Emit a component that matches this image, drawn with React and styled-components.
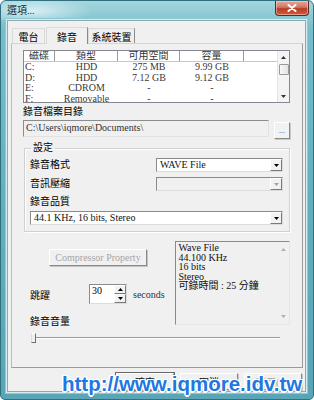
import React from 'react';
import styled, { createGlobalStyle } from 'styled-components';

const GlobalStyle = createGlobalStyle`
  body {
    margin: 0;
    background: #ffffff;
  }
  * {
    box-sizing: border-box;
  }
`;

const UI_FONT = `"Liberation Serif", "Noto Sans CJK TC", serif`;

// Window frame
const Window = styled.div`
  position: relative;
  width: 314px;
  height: 400px;
  display: flex;
  flex-direction: column;
  padding: 0 7px 7px 6px;
  border: 1px solid #2f6f7e;
  border-radius: 6px 6px 5px 5px;
  background: linear-gradient(180deg, #a4d6de 0%, #78bdc9 7%, #64afbe 50%, #5aa5b5 100%);
  font-family: ${UI_FONT};
  font-size: 10px;
  color: #000;
  overflow: hidden;
`;

const TitleBar = styled.div`
  height: 19px;
  display: flex;
  align-items: flex-start;
  background: radial-gradient(ellipse 60px 14px at 32px 10px, rgba(230, 247, 250, 0.8), rgba(230, 247, 250, 0) 100%);
  margin: 0 -7px 0 -6px;
  padding: 0 0 0 6px;
`;

const TitleText = styled.span`
  margin-top: 4px;
  font-size: 10px;
  line-height: 12px;
  color: #15262c;
`;

const CloseButton = styled.div`
  margin-left: auto;
  margin-right: 4px;
  width: 34px;
  height: 15px;
  display: flex;
  align-items: center;
  justify-content: center;
  border: 1px solid #5e2a22;
  border-top: none;
  border-radius: 0 0 4px 4px;
  background: linear-gradient(180deg, #e6a89c 0%, #d27562 45%, #b83d24 55%, #cc5c42 100%);
  box-shadow: inset 0 0 0 1px rgba(255, 220, 210, 0.5);
`;

const Client = styled.div`
  flex: 1;
  display: flex;
  flex-direction: column;
  padding: 5px 2px 1px 3px;
  background: #f0f0f0;
  border: 1px solid #8fa9b0;
  box-shadow: 0 0 0 1px #d4ebef, 0 0 0 2px #8ccbd6;
`;

// Tabs
const TabStrip = styled.div`
  height: 17px;
  display: flex;
  align-items: flex-end;
  padding-left: 1px;
`;

const Tab = styled.div`
  width: ${p => p.$w}px;
  height: ${p => (p.$active ? 17 : 15)}px;
  margin-right: ${p => (p.$active ? 0 : 1)}px;
  display: flex;
  align-items: center;
  justify-content: center;
  font-size: 10px;
  background: #f0f0f0;
  border: 1px solid #dadada;
  border-right-color: ${p => (p.$edge ? '#8a8a8a' : '#dadada')};
  border-bottom: none;
  position: relative;
  z-index: ${p => (p.$active ? 1 : 0)};
  margin-bottom: ${p => (p.$active ? -1 : 0)}px;
`;

const Panel = styled.div`
  height: 325px;
  display: flex;
  flex-direction: column;
  padding: 6px 12px 0 11px;
  border: 1px solid #9a9a9a;
  border-top-color: #d4d4d4;
  border-left-color: #bcbcbc;
`;

// Drive list
const DriveList = styled.div`
  height: 53px;
  display: flex;
  border: 1px solid #828790;
  background: #ffffff;
  overflow: hidden;
`;

const ListBody = styled.div`
  flex: 1;
  overflow: hidden;
`;

const HeaderRow = styled.div`
  display: grid;
  grid-template-columns: 31px 63px 62px 64px 1fr;
  height: 11px;
  border-bottom: 1px solid #c8c8c8;
`;

const HeaderCell = styled.div`
  font-size: 10px;
  line-height: 10px;
  text-align: center;
  color: #333;
  border-right: 1px solid #9a9a9a;
  &:last-child {
    border-right: none;
  }
`;

const DataRow = styled.div`
  display: grid;
  grid-template-columns: 31px 63px 62px 64px 1fr;
  height: 10.5px;
`;

const DataCell = styled.div`
  font-size: 10px;
  line-height: 10.5px;
  color: #3a3a3a;
  text-align: ${p => (p.$left ? 'left' : 'center')};
  padding-left: ${p => (p.$left ? 1 : 0)}px;
  white-space: nowrap;
`;

const ScrollTrack = styled.div`
  width: 12px;
  display: flex;
  flex-direction: column;
  align-items: center;
  background: #f4f4f4;
  border-left: 1px solid #e4e4e4;
`;

const ScrollArrow = styled.div`
  height: ${p => p.$h}px;
  width: 11px;
  display: flex;
  align-items: center;
  justify-content: center;
`;

const ScrollThumb = styled.div`
  width: 10px;
  height: 11px;
  margin-top: 1px;
  border: 1px solid #9a9a9a;
  border-radius: 1px;
  background: linear-gradient(90deg, #f8f8f8, #e4e4e4);
`;

const ScrollSpacer = styled.div`
  flex: 1;
`;

// Path
const FieldLabel = styled.div`
  height: 12px;
  line-height: 12px;
  margin-top: ${p => p.$mt || 0}px;
  padding-left: ${p => p.$pl || 0}px;
  font-size: 10px;
  white-space: nowrap;
`;

const PathRow = styled.div`
  margin-top: 2px;
  display: flex;
  align-items: flex-start;
  gap: 5px;
`;

const PathBox = styled.div`
  width: 247px;
  height: 17px;
  padding: 1px 2px;
  font-size: 10px;
  line-height: 12px;
  color: #333;
  background: #f0f0f0;
  border: 1px solid;
  border-color: #8c8c8c #e2e2e2 #e2e2e2 #8c8c8c;
  white-space: nowrap;
  overflow: hidden;
`;

const BrowseButton = styled.div`
  margin-top: 2px;
  width: 16px;
  height: 17px;
  display: flex;
  align-items: flex-end;
  justify-content: center;
  padding-bottom: 3px;
  font-size: 8px;
  line-height: 8px;
  color: #444;
  background: #f2f2f2;
  border: 1px solid;
  border-color: #ffffff #8a8a8a #8a8a8a #ffffff;
  box-shadow: 1px 1px 0 #c8c8c8;
`;

// Group box
const GroupBox = styled.fieldset`
  margin: 3px 0 0 1px;
  padding: 4px 6px 6px 5px;
  min-width: 0;
  border: 1px solid #d0d0d0;
  box-shadow: inset 1px 1px 0 #ffffff, 1px 1px 0 #ffffff;
`;

const GroupLegend = styled.legend`
  margin-left: 1px;
  padding: 0 2px;
  font-size: 10px;
  line-height: 12px;
`;

const SettingRow = styled.div`
  margin-top: ${p => p.$mt || 0}px;
  display: flex;
  align-items: center;
  height: 14px;
`;

const SettingLabel = styled.div`
  width: 126px;
  font-size: 10px;
  line-height: 12px;
`;

const Combo = styled.div`
  flex: 1;
  height: 14px;
  display: flex;
  align-items: center;
  padding-left: 3px;
  font-size: 10px;
  color: #111;
  background: ${p => (p.$disabled ? '#f0f0f0' : '#ffffff')};
  border: 1px solid;
  border-color: #8a8a8a #dcdcdc #dcdcdc #8a8a8a;
`;

const ComboText = styled.span`
  flex: 1;
  line-height: 12px;
  white-space: nowrap;
`;

const ComboButton = styled.div`
  width: 12px;
  height: 12px;
  display: flex;
  align-items: center;
  justify-content: center;
  background: #f2f2f2;
  border: 1px solid;
  border-color: #ffffff #7a7a7a #7a7a7a #ffffff;
`;

// Lower section
const LowerRow = styled.div`
  margin-top: 9px;
  display: flex;
  align-items: flex-start;
`;

const LeftCol = styled.div`
  width: 153px;
  display: flex;
  flex-direction: column;
`;

const PushButton = styled.div`
  width: ${p => p.$w}px;
  height: 17px;
  margin-top: ${p => p.$mt || 0}px;
  margin-left: ${p => p.$ml || 0}px;
  display: flex;
  align-items: center;
  justify-content: center;
  font-family: ${UI_FONT};
  font-size: 10px;
  color: ${p => (p.$disabled ? '#a6a6a6' : '#111')};
  background: #f0f0f0;
  border: 1px solid;
  border-color: #ffffff #8a8a8a #8a8a8a #ffffff;
  box-shadow: ${p => (p.$default ? '0 0 0 1px #6a6a6a' : '1px 1px 0 #c4c4c4')};
  white-space: nowrap;
`;

const SpinRow = styled.div`
  margin-top: 18px;
  padding-left: 7px;
  display: flex;
  align-items: center;
  height: 20px;
`;

const SpinLabel = styled.div`
  width: 59px;
  font-size: 10px;
`;

const SpinBox = styled.div`
  display: flex;
  height: 20px;
  border: 1px solid;
  border-color: #8a8a8a #dcdcdc #dcdcdc #8a8a8a;
`;

const SpinInput = styled.div`
  width: 24px;
  padding: 0 2px;
  font-size: 10px;
  line-height: 11px;
  background: #ffffff;
`;

const SpinButtons = styled.div`
  width: 12px;
  display: flex;
  flex-direction: column;
`;

const SpinButton = styled.div`
  flex: 1;
  display: flex;
  align-items: center;
  justify-content: center;
  background: #f2f2f2;
  border: 1px solid;
  border-color: #ffffff #7a7a7a #7a7a7a #ffffff;
`;

const Unit = styled.div`
  margin-left: 6px;
  font-size: 10px;
  color: #333;
`;

const InfoBox = styled.div`
  width: 115px;
  height: 84px;
  display: flex;
  background: #f0f0f0;
  border: 1px solid;
  border-color: #8a8a8a #e6e6e6 #e6e6e6 #8a8a8a;
`;

const InfoText = styled.div`
  flex: 1;
  padding: 1px 2px;
  font-size: 10px;
  line-height: 9.6px;
  color: #111;
  white-space: nowrap;
`;

const InfoScroll = styled.div`
  width: 12px;
  display: flex;
  flex-direction: column;
  justify-content: space-between;
  align-items: center;
  padding: 6px 0 6px;
`;

const SliderArea = styled.div`
  height: 20px;
  padding-left: 10px;
  display: flex;
  align-items: center;
`;

const SliderTrack = styled.div`
  position: relative;
  width: 247px;
  height: 2px;
  border-top: 1px solid #9a9a9a;
  border-bottom: 1px solid #ffffff;
  background: #c8c8c8;
`;

const SliderThumb = styled.div`
  position: absolute;
  left: -2px;
  top: -5px;
  width: 5px;
  height: 10px;
  background: #f0f0f0;
  border: 1px solid;
  border-color: #ffffff #6e6e6e #6e6e6e #dcdcdc;
`;

const ButtonRow = styled.div`
  margin-top: 5px;
  display: flex;
  justify-content: flex-end;
  gap: 6px;
  padding-right: 1px;
`;

const Watermark = styled.div`
  position: absolute;
  left: 61px;
  top: 371px;
  font-family: "Liberation Sans", Arial, sans-serif;
  font-weight: bold;
  font-size: 20.5px;
  line-height: 24px;
  color: #1e78e0;
  white-space: nowrap;
  text-shadow:
    -1.5px 0 0 #ffffff, 1.5px 0 0 #ffffff, 0 -1.5px 0 #ffffff, 0 1.5px 0 #ffffff,
    -1px -1px 0 #ffffff, 1px -1px 0 #ffffff, -1px 1px 0 #ffffff, 1px 1px 0 #ffffff,
    1px 2px 1px rgba(0, 40, 80, 0.4);
`;

const Arrow = ({ up, color = '#000', w = 5, h = 3 }) => (
  <svg width={w} height={h} viewBox="0 0 5 3">
    <path d={up ? 'M0 3 L2.5 0 L5 3 Z' : 'M0 0 L5 0 L2.5 3 Z'} fill={color} />
  </svg>
);

const CloseIcon = () => (
  <svg width="10" height="8" viewBox="0 0 10 8">
    <path d="M1.5 1 L8.5 7 M8.5 1 L1.5 7" stroke="#ffffff" strokeWidth="2" strokeLinecap="round" />
  </svg>
);

const drives = [
  ['C:', 'HDD', '275 MB', '9.99 GB'],
  ['D:', 'HDD', '7.12 GB', '9.12 GB'],
  ['E:', 'CDROM', '-', '-'],
  ['F:', 'Removable', '-', '-'],
];

const infoLines = ['Wave File', '44.100 KHz', '16 bits', 'Stereo', '可錄時間 : 25 分鐘'];

export default function App() {
  return (
    <>
      <GlobalStyle />
      <Window>
        <TitleBar>
          <TitleText>選項...</TitleText>
          <CloseButton>
            <CloseIcon />
          </CloseButton>
        </TitleBar>
        <Client>
          <TabStrip>
            <Tab $w={33}>電台</Tab>
            <Tab $w={42} $active $edge>錄音</Tab>
            <Tab $w={47} $edge>系統裝置</Tab>
          </TabStrip>
          <Panel>
            <DriveList>
              <ListBody>
                <HeaderRow>
                  <HeaderCell>磁碟</HeaderCell>
                  <HeaderCell>類型</HeaderCell>
                  <HeaderCell>可用空間</HeaderCell>
                  <HeaderCell>容量</HeaderCell>
                  <HeaderCell />
                </HeaderRow>
                {drives.map(d => (
                  <DataRow key={d[0]}>
                    <DataCell $left>{d[0]}</DataCell>
                    <DataCell>{d[1]}</DataCell>
                    <DataCell>{d[2]}</DataCell>
                    <DataCell>{d[3]}</DataCell>
                    <DataCell />
                  </DataRow>
                ))}
              </ListBody>
              <ScrollTrack>
                <ScrollArrow $h={12}>
                  <Arrow up color="#333" />
                </ScrollArrow>
                <ScrollThumb />
                <ScrollSpacer />
                <ScrollArrow $h={12}>
                  <Arrow color="#333" />
                </ScrollArrow>
              </ScrollTrack>
            </DriveList>

            <FieldLabel $mt={3}>錄音檔案目錄</FieldLabel>
            <PathRow>
              <PathBox>C:\Users\iqmore\Documents\</PathBox>
              <BrowseButton>...</BrowseButton>
            </PathRow>

            <GroupBox>
              <GroupLegend>設定</GroupLegend>
              <SettingRow>
                <SettingLabel>錄音格式</SettingLabel>
                <Combo>
                  <ComboText>WAVE File</ComboText>
                  <ComboButton>
                    <Arrow />
                  </ComboButton>
                </Combo>
              </SettingRow>
              <SettingRow $mt={5}>
                <SettingLabel>音訊壓縮</SettingLabel>
                <Combo $disabled>
                  <ComboText />
                  <ComboButton>
                    <Arrow color="#a0a0a0" />
                  </ComboButton>
                </Combo>
              </SettingRow>
              <FieldLabel $mt={5}>錄音品質</FieldLabel>
              <SettingRow $mt={3}>
                <Combo>
                  <ComboText>44.1 KHz, 16 bits, Stereo</ComboText>
                  <ComboButton>
                    <Arrow />
                  </ComboButton>
                </Combo>
              </SettingRow>
            </GroupBox>

            <LowerRow>
              <LeftCol>
                <PushButton $w={98} $mt={8} $ml={26} $disabled>
                  Compressor Property
                </PushButton>
                <SpinRow>
                  <SpinLabel>跳躍</SpinLabel>
                  <SpinBox>
                    <SpinInput>30</SpinInput>
                    <SpinButtons>
                      <SpinButton>
                        <Arrow up />
                      </SpinButton>
                      <SpinButton>
                        <Arrow />
                      </SpinButton>
                    </SpinButtons>
                  </SpinBox>
                  <Unit>seconds</Unit>
                </SpinRow>
                <FieldLabel $mt={12} $pl={7}>錄音音量</FieldLabel>
              </LeftCol>
              <InfoBox>
                <InfoText>
                  {infoLines.map(line => (
                    <div key={line}>{line}</div>
                  ))}
                </InfoText>
                <InfoScroll>
                  <Arrow up color="#b0b0b0" />
                  <Arrow color="#b0b0b0" />
                </InfoScroll>
              </InfoBox>
            </LowerRow>

            <SliderArea>
              <SliderTrack>
                <SliderThumb />
              </SliderTrack>
            </SliderArea>
          </Panel>
          <ButtonRow>
            <PushButton $w={58} $default>確定</PushButton>
            <PushButton $w={58}>取消</PushButton>
            <PushButton $w={58} $disabled>套用(A)</PushButton>
          </ButtonRow>
        </Client>
        <Watermark>http://www.iqmore.idv.tw</Watermark>
      </Window>
    </>
  );
}
